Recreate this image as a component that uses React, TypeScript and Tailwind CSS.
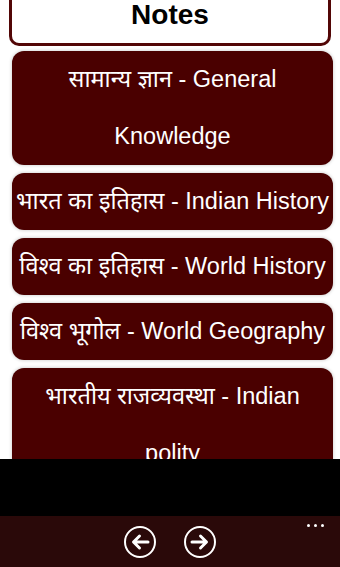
import React from "react";

const topics: string[][] = [
  ["सामान्य ज्ञान - General", "Knowledge"],
  ["भारत का इतिहास - Indian History"],
  ["विश्व का इतिहास - World History"],
  ["विश्व भूगोल - World Geography"],
  ["भारतीय राजव्यवस्था - Indian", "polity"],
];

function CircleArrow({ dir }: { dir: "left" | "right" }) {
  return (
    <svg width="34" height="34" viewBox="0 0 34 34" fill="none">
      <circle cx="17" cy="17" r="15" stroke="white" strokeWidth="2" />
      {dir === "left" ? (
        <path d="M25 17H11M16.5 11L10.5 17L16.5 23" stroke="white" strokeWidth="3" strokeLinecap="round" strokeLinejoin="round" />
      ) : (
        <path d="M9 17H23M17.5 11L23.5 17L17.5 23" stroke="white" strokeWidth="3" strokeLinecap="round" strokeLinejoin="round" />
      )}
    </svg>
  );
}

export default function App() {
  return (
    <div className="w-[340px] h-[567px] flex flex-col bg-white overflow-hidden" style={{ fontFamily: '"Liberation Sans", Arial, "Noto Sans", sans-serif' }}>
      <div className="h-[459px] overflow-hidden flex flex-col">
        <div className="mx-[9px] w-[322px] h-[46px] shrink-0 bg-white border-x-[3px] border-b-[3px] border-[#520606] rounded-b-[10px] flex justify-center pt-[1px]">
          <span className="text-[28px] font-bold leading-[28px] text-black">Notes</span>
        </div>
        <div className="flex flex-col gap-[8px] mt-[5px] ml-[12px] w-[321px]">
          {topics.map((lines) => (
            <div
              key={lines[0]}
              className="shrink-0 bg-[#4a0000] rounded-[12px] text-white text-center text-[23.5px] leading-[57px] whitespace-nowrap shadow-[0_0_3px_1px_rgba(0,0,0,0.14)]"
            >
              {lines.map((l) => (
                <div key={l}>{l}</div>
              ))}
            </div>
          ))}
        </div>
      </div>
      <div className="h-[57px] bg-black" />
      <div className="flex-1 bg-[#2a0909] relative flex justify-center items-center gap-[26px] pt-[1px]">
        <CircleArrow dir="left" />
        <CircleArrow dir="right" />
        <div className="absolute right-[16px] top-[8px] flex gap-[4px]">
          <span className="w-[3px] h-[3px] rounded-full bg-white" />
          <span className="w-[3px] h-[3px] rounded-full bg-white" />
          <span className="w-[3px] h-[3px] rounded-full bg-white" />
        </div>
      </div>
    </div>
  );
}
